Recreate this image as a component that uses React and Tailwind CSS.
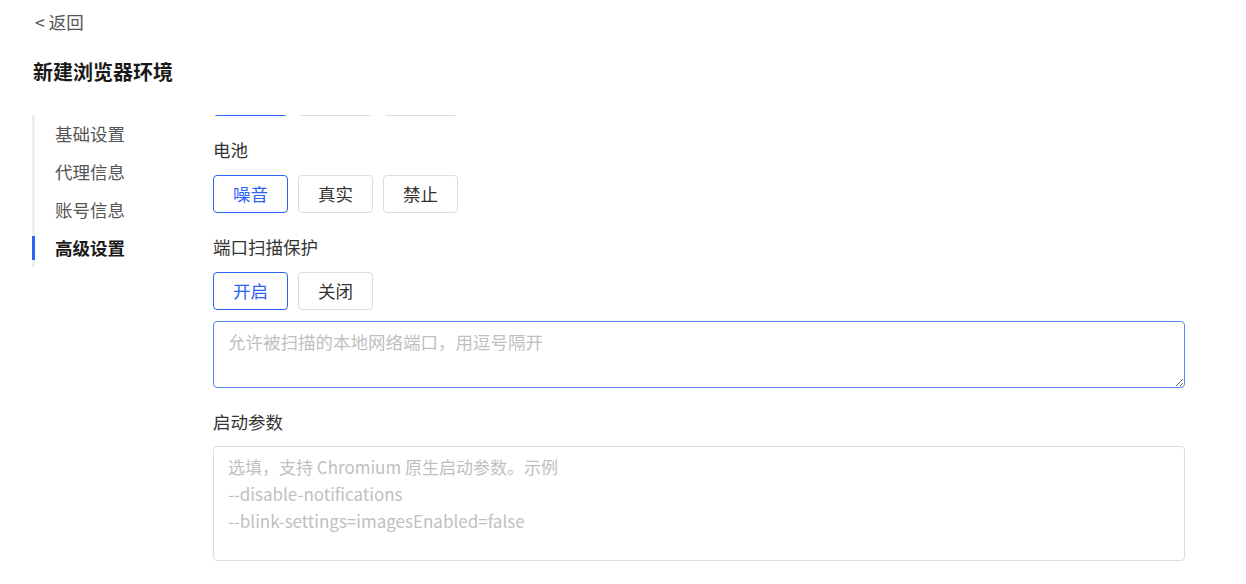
import React from "react";

const FONT = { fontFamily: '"Noto Sans CJK SC", "Noto Sans", sans-serif' };

function Btn({ children, active }) {
  return (
    <button
      className={
        "w-[75px] h-[38px] rounded-[4px] border text-[17.5px] leading-[24px] bg-white " +
        (active ? "border-[#2b63f5] text-[#2b63f5]" : "border-[#dcdcdc] text-[#333]")
      }
    >
      {children}
    </button>
  );
}

export default function App() {
  const nav = ["基础设置", "代理信息", "账号信息", "高级设置"];
  return (
    <div className="h-[584px] overflow-hidden bg-white pl-[33px]" style={FONT}>
      <div className="pt-[11px] pl-[2px] text-[17.5px] leading-[22px] text-[#555]">&lt; 返回</div>
      <h1 className="mt-[25px] text-[20px] leading-[28px] font-bold text-[#1a1a1a]">新建浏览器环境</h1>
      <div className="mt-[29px] flex">
        <nav className="ml-[-1px] w-[181px] shrink-0 self-start border-l-[3px] border-[#eeeeee]">
          {nav.map((n, i) => (
            <div
              key={n}
              className={
                "relative flex h-[38px] items-center pl-[20px] text-[17.5px] " +
                (i === 3 ? "font-bold text-[#1a1a1a]" : "text-[#555]")
              }
            >
              {i === 3 && (
                <span className="absolute left-[-3px] top-[7px] h-[24px] w-[3px] bg-[#2b63f5]" />
              )}
              {n}
            </div>
          ))}
        </nav>
        <div className="h-[470px] flex-1 overflow-hidden pr-[61px]">
          <div className="-mt-[37px] flex gap-[10px]">
            <Btn active>噪音</Btn>
            <Btn>真实</Btn>
            <Btn>禁止</Btn>
          </div>

          <div className="mt-[23px] text-[17.5px] leading-[22px] text-[#333]">电池</div>
          <div className="mt-[14px] flex gap-[10px]">
            <Btn active>噪音</Btn>
            <Btn>真实</Btn>
            <Btn>禁止</Btn>
          </div>

          <div className="mt-[23px] text-[17.5px] leading-[22px] text-[#333]">端口扫描保护</div>
          <div className="mt-[14px] flex gap-[10px]">
            <Btn active>开启</Btn>
            <Btn>关闭</Btn>
          </div>
          <textarea
            className="mt-[11px] block h-[67px] w-full rounded-[4px] border border-[#5b8cf5] px-[14px] pt-[6px] text-[17.5px] leading-[27px] text-[#333] outline-none placeholder:text-[#bfbfbf]"
            placeholder="允许被扫描的本地网络端口，用逗号隔开"
          />

          <div className="mt-[23px] text-[17.5px] leading-[22px] text-[#333]">启动参数</div>
          <textarea
            className="mt-[13px] block h-[115px] w-full resize-none rounded-[4px] border border-[#dcdcdc] px-[14px] pt-[6px] text-[17px] leading-[27px] text-[#333] outline-none placeholder:text-[#bfbfbf]"
            placeholder={"选填，支持 Chromium 原生启动参数。示例\n--disable-notifications\n--blink-settings=imagesEnabled=false"}
          />
        </div>
      </div>
    </div>
  );
}
